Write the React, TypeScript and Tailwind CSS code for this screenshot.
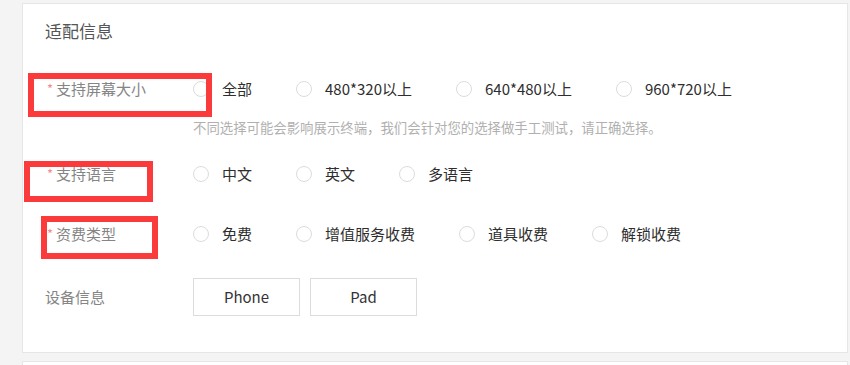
import React from 'react'

const font = { fontFamily: '"Noto Sans CJK SC", "Noto Sans", sans-serif' }

type Row = { label: string; required?: boolean; options: string[]; mt: string }

const rows: Row[] = [
  { label: '支持屏幕大小', required: true, options: ['全部', '480*320以上', '640*480以上', '960*720以上'], mt: 'mt-[30px]' },
  { label: '支持语言', required: true, options: ['中文', '英文', '多语言'], mt: 'mt-[21px]' },
  { label: '资费类型', required: true, options: ['免费', '增值服务收费', '道具收费', '解锁收费'], mt: 'mt-[28px]' },
]

function Radio({ text }: { text: string }) {
  return (
    <label className="flex items-center mr-[44px] cursor-pointer">
      <span className="w-[16px] h-[16px] rounded-full border border-[#dcdcdc] bg-white" />
      <span className="ml-[13px] text-[15px] text-[#2e2e2e]">{text}</span>
    </label>
  )
}

function Label({ text, required }: { text: string; required?: boolean }) {
  return (
    <div className="w-[148px] shrink-0 flex items-center text-[15px] text-[#858585]">
      {required && <span className="ml-[2px] mr-[3px] text-[13px] text-[#f48a8a]">*</span>}
      {text}
    </div>
  )
}

export default function App() {
  return (
    <div className="relative w-[850px] h-[365px] overflow-hidden bg-[#f4f4f4] pl-[22px] pr-[2px] pt-[3px]" style={font}>
      <div className="h-[350px] bg-white border border-[#e6e6e6] pl-[22px] pt-[15px]">
        <h3 className="text-[17px] leading-[24px] text-[#555]">适配信息</h3>

        {rows.map((r, i) => (
          <div key={r.label}>
            <div className={`flex items-center h-[32px] ${r.mt}`}>
              <Label text={r.label} required={r.required} />
              {r.options.map((o) => (
                <Radio key={o} text={o} />
              ))}
            </div>
            {i === 0 && (
              <div className="mt-[12px] pl-[148px] text-[13.4px] leading-[20px] text-[#b0b0b0]">
                不同选择可能会影响展示终端，我们会针对您的选择做手工测试，请正确选择。
              </div>
            )}
          </div>
        ))}

        <div className="flex items-center mt-[28px]">
          <Label text="设备信息" />
          <div className="flex gap-[10px]">
            <button className="w-[107px] h-[38px] border border-[#dcdcdc] bg-white text-[15px] text-[#333]">Phone</button>
            <button className="w-[107px] h-[38px] border border-[#dcdcdc] bg-white text-[15px] text-[#333]">Pad</button>
          </div>
        </div>
      </div>
      <div className="mt-[8px] h-[40px] bg-white border border-[#e6e6e6]" />

      {/* red annotation boxes drawn over the form */}
      <div className="absolute left-[28px] top-[73px] w-[184px] h-[44px] border-[6px] border-[#fb3b3b] pointer-events-none" />
      <div className="absolute left-[24px] top-[161px] w-[129px] h-[41px] border-[6px] border-[#fb3b3b] pointer-events-none" />
      <div className="absolute left-[41px] top-[216px] w-[117px] h-[43px] border-[6px] border-[#fb3b3b] pointer-events-none" />
    </div>
  )
}
